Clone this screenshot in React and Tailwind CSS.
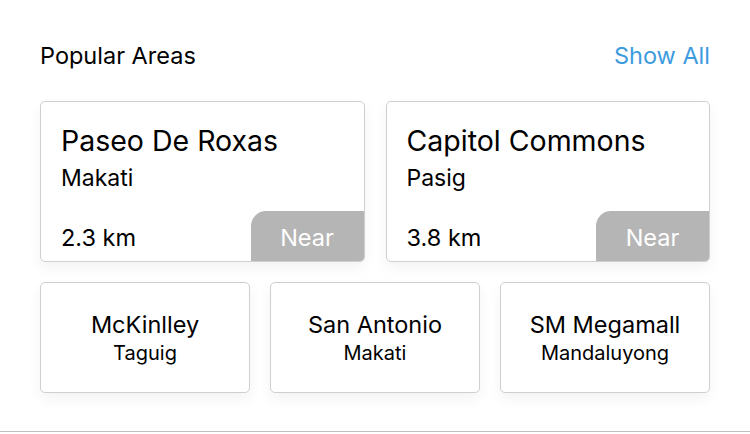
const featured = [
  { name: 'Paseo De Roxas', city: 'Makati', distance: '2.3 km' },
  { name: 'Capitol Commons', city: 'Pasig', distance: '3.8 km' },
]

const others = [
  { name: 'McKinlley', city: 'Taguig' },
  { name: 'San Antonio', city: 'Makati' },
  { name: 'SM Megamall', city: 'Mandaluyong' },
]

const FeaturedCard = ({ area }) => (
  <div className="relative h-[161px] rounded-[5px] border border-[#cfcfcf] bg-white shadow-[0_6px_14px_rgba(0,0,0,0.05)] overflow-hidden">
    <div className="pl-5 pt-[21px]">
      <p className="text-[28.5px] leading-[36px] text-black">{area.name}</p>
      <p className="mt-[4px] text-[23px] leading-[30px] text-black">{area.city}</p>
    </div>
    <p className="absolute left-5 bottom-[8px] text-[23.5px] leading-[30px] text-black">{area.distance}</p>
    <div className="absolute right-0 bottom-0 w-[113px] h-[50px] pt-[3px] bg-[#b5b5b5] rounded-tl-[15px] flex items-center justify-center">
      <span className="text-[23.5px] text-white">Near</span>
    </div>
  </div>
)

const SmallCard = ({ area }) => (
  <div className="h-[111px] rounded-[5px] border border-[#cfcfcf] bg-white shadow-[0_6px_14px_rgba(0,0,0,0.05)] flex flex-col items-center justify-center">
    <p className="text-[23.5px] leading-[30px] text-black">{area.name}</p>
    <p className="text-[20px] leading-[26px] text-black">{area.city}</p>
  </div>
)

export default function App() {
  return (
    <div className="h-[432px] w-[750px] bg-white border-b border-[#bdbdbd] px-10 font-['Inter',sans-serif]">
      <div className="flex items-center justify-between pt-[10px] h-[101px]">
        <h2 className="text-[23.5px] leading-[30px] text-black">Popular Areas</h2>
        <span className="text-[23.5px] leading-[30px] text-[#3d9be0]">Show All</span>
      </div>
      <div className="grid grid-cols-2 gap-[21px]">
        {featured.map((area) => (
          <FeaturedCard key={area.name} area={area} />
        ))}
      </div>
      <div className="grid grid-cols-3 gap-5 mt-5">
        {others.map((area) => (
          <SmallCard key={area.name} area={area} />
        ))}
      </div>
    </div>
  )
}
